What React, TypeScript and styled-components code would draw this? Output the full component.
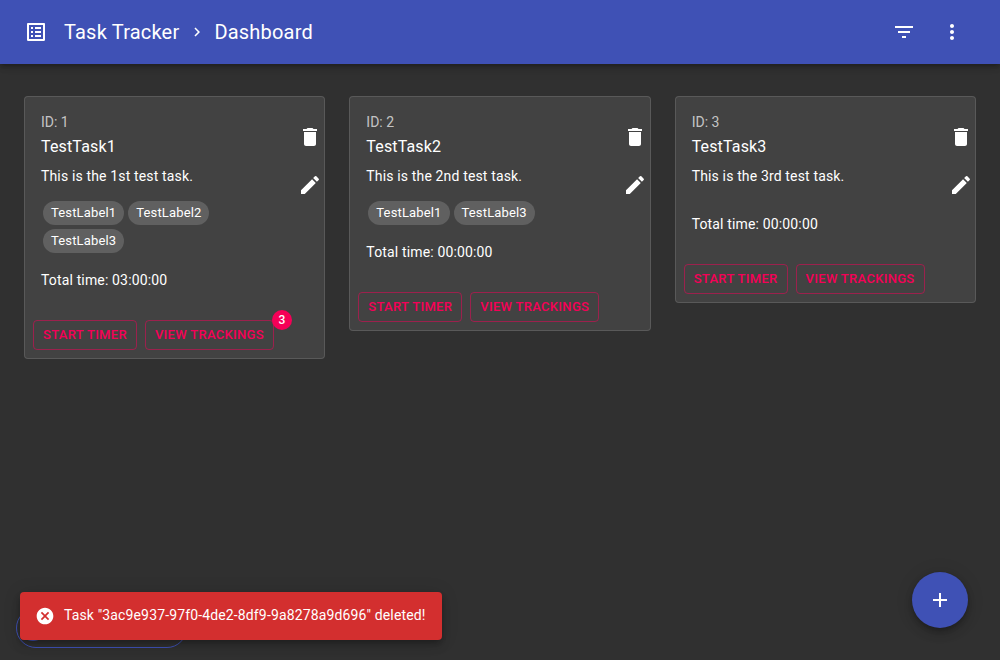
import styled, { createGlobalStyle } from "styled-components";

const GlobalStyle = createGlobalStyle`
  html, body {
    margin: 0;
    height: 100%;
    background: #303030;
    color: #fff;
    font-family: Roboto, "Liberation Sans", sans-serif;
  }
  * { box-sizing: border-box; }
`;

const Page = styled.div`
  position: relative;
  width: 1000px;
  height: 660px;
  overflow: hidden;
`;

const AppBar = styled.header`
  height: 64px;
  padding: 0 24px;
  display: flex;
  align-items: center;
  background: #3f51b5;
  box-shadow: 0 2px 4px -1px rgba(0,0,0,.2), 0 4px 5px 0 rgba(0,0,0,.14), 0 1px 10px 0 rgba(0,0,0,.12);
`;

const Crumbs = styled.div`
  display: flex;
  align-items: center;
  flex: 1;
  margin-left: 16px;
  font-size: 20px;
  font-weight: 400;
  letter-spacing: 0.2px;
`;

const CrumbSeparator = styled.span`
  display: flex;
  margin: 0 8.5px;
`;

const BarButton = styled.button`
  width: 48px;
  height: 48px;
  padding: 0;
  border: 0;
  background: none;
  color: #fff;
  display: flex;
  align-items: center;
  justify-content: center;
`;

const Cards = styled.main`
  display: grid;
  grid-template-columns: repeat(3, 1fr);
  gap: 24px;
  align-items: start;
  padding: 32px 24px;
`;

const Card = styled.section`
  background: #424242;
  border: 1px solid rgba(255,255,255,.12);
  border-radius: 4px;
`;

const CardBody = styled.div`
  display: flex;
  padding: 16px 2.4px 30px 16px;
`;

const CardText = styled.div`
  flex: 1;
  min-width: 0;
`;

const TaskId = styled.div`
  font-size: 14px;
  line-height: 20px;
  color: rgba(255,255,255,.7);
  margin-top: -1px;
`;

const TaskName = styled.div`
  font-size: 16px;
  line-height: 24px;
  letter-spacing: 0.15px;
  margin-top: 3px;
`;

const Description = styled.div`
  font-size: 14px;
  line-height: 20px;
  margin-top: 7px;
  letter-spacing: 0.15px;
`;

const Chips = styled.div`
  display: flex;
  flex-wrap: wrap;
  margin: 13px 0 15px;
`;

const Chip = styled.span`
  height: 24px;
  margin: 2px;
  padding: 0 8px;
  border-radius: 12px;
  background: rgba(255,255,255,.16);
  font-size: 13px;
  line-height: 24px;
  letter-spacing: 0.15px;
`;

const TotalTime = styled.div`
  font-size: 14px;
  line-height: 20px;
  letter-spacing: 0.15px;
`;

const CardIcons = styled.div`
  width: 24px;
  padding-top: 12px;
  display: flex;
  flex-direction: column;
  gap: 24px;
  margin-left: 8px;
`;

const IconSlot = styled.span`
  display: flex;
  width: 24px;
  height: 24px;
  color: #fff;
`;

const Actions = styled.div`
  display: flex;
  gap: 8px;
  padding: 0 8px 8px;
`;

const ActionWrap = styled.span`
  position: relative;
  display: inline-flex;
`;

const ActionButton = styled.button`
  height: 30px;
  padding: 0 9px 2px;
  background: none;
  border: 1px solid rgba(245,0,87,.5);
  border-radius: 4px;
  color: #f50057;
  font-family: inherit;
  font-size: 13px;
  font-weight: 500;
  letter-spacing: 0.3px;
  text-transform: uppercase;
`;

const Badge = styled.span`
  position: absolute;
  top: -10px;
  right: -18px;
  width: 20px;
  height: 20px;
  border-radius: 50%;
  background: #f50057;
  color: #fff;
  font-size: 12px;
  font-weight: 500;
  line-height: 20px;
  text-align: center;
`;

const Fab = styled.button`
  position: absolute;
  right: 32px;
  bottom: 32px;
  width: 56px;
  height: 56px;
  padding: 0;
  border: 0;
  border-radius: 50%;
  background: #3f51b5;
  color: #fff;
  display: flex;
  align-items: center;
  justify-content: center;
  box-shadow: 0 3px 5px -1px rgba(0,0,0,.2), 0 6px 10px 0 rgba(0,0,0,.14), 0 1px 18px 0 rgba(0,0,0,.12);
`;

const HiddenPill = styled.div`
  position: absolute;
  left: 16px;
  bottom: 12px;
  width: 171px;
  height: 40px;
  border: 1px solid #3f51b5;
  border-radius: 20px;
`;

const PillDot = styled.span`
  position: absolute;
  left: 4px;
  top: 8px;
  width: 24px;
  height: 24px;
  border-radius: 50%;
  background: #3f51b5;
`;

const Snackbar = styled.div`
  position: absolute;
  left: 20px;
  bottom: 20px;
  width: 422px;
  height: 48px;
  padding: 0 16px 0 15px;
  display: flex;
  align-items: center;
  gap: 9px;
  background: #d32f2f;
  border-radius: 4px;
  font-size: 14px;
  letter-spacing: 0.14px;
  color: #fff;
  box-shadow: 0 3px 5px -1px rgba(0,0,0,.2), 0 6px 10px 0 rgba(0,0,0,.14), 0 1px 18px 0 rgba(0,0,0,.12);
`;

const SnackMessage = styled.span`
  margin-bottom: 2px;
`;

function Icon({ d, size = 24 }: { d: string; size?: number }) {
  return (
    <svg width={size} height={size} viewBox="0 0 24 24" fill="currentColor">
      <path d={d} />
    </svg>
  );
}

const icons = {
  list: "M19 5v14H5V5h14m1.1-2H3.9c-.5 0-.9.4-.9.9v16.2c0 .4.4.9.9.9h16.2c.4 0 .9-.5.9-.9V3.9c0-.5-.5-.9-.9-.9zM11 7h6v2h-6V7zm0 4h6v2h-6v-2zm0 4h6v2h-6zM7 7h2v2H7zm0 4h2v2H7zm0 4h2v2H7z",
  next: "M10 6L8.59 7.41 13.17 12l-4.58 4.59L10 18l6-6z",
  filter: "M10 18h4v-2h-4v2zM3 6v2h18V6H3zm3 7h12v-2H6v2z",
  more: "M12 8c1.1 0 2-.9 2-2s-.9-2-2-2-2 .9-2 2 .9 2 2 2zm0 2c-1.1 0-2 .9-2 2s.9 2 2 2 2-.9 2-2-.9-2-2-2zm0 6c-1.1 0-2 .9-2 2s.9 2 2 2 2-.9 2-2-.9-2-2-2z",
  trash: "M6 19c0 1.1.9 2 2 2h8c1.1 0 2-.9 2-2V7H6v12zM19 4h-3.5l-1-1h-5l-1 1H5v2h14V4z",
  edit: "M3 17.25V21h3.75L17.81 9.94l-3.75-3.75L3 17.25zM20.71 7.04c.39-.39.39-1.02 0-1.41l-2.34-2.34a.9959.9959 0 0 0-1.41 0l-1.83 1.83 3.75 3.75 1.83-1.83z",
  add: "M19 13h-6v6h-2v-6H5v-2h6V5h2v6h6v2z",
  cancel: "M12 2C6.47 2 2 6.47 2 12s4.47 10 10 10 10-4.47 10-10S17.53 2 12 2zm5 13.59L15.59 17 12 13.41 8.41 17 7 15.59 10.59 12 7 8.41 8.41 7 12 10.59 15.59 7 17 8.41 13.41 12 17 15.59z",
};

interface ITask {
  id: number;
  name: string;
  description: string;
  labels: string[];
  total: string;
  trackings?: number;
}

const tasks: ITask[] = [
  { id: 1, name: "TestTask1", description: "This is the 1st test task.", labels: ["TestLabel1", "TestLabel2", "TestLabel3"], total: "03:00:00", trackings: 3 },
  { id: 2, name: "TestTask2", description: "This is the 2nd test task.", labels: ["TestLabel1", "TestLabel3"], total: "00:00:00" },
  { id: 3, name: "TestTask3", description: "This is the 3rd test task.", labels: [], total: "00:00:00" },
];

function App() {
  return (
    <Page>
      <GlobalStyle />
      <AppBar>
        <Icon d={icons.list} />
        <Crumbs>
          Task Tracker
          <CrumbSeparator>
            <Icon d={icons.next} size={18} />
          </CrumbSeparator>
          Dashboard
        </Crumbs>
        <BarButton aria-label="filter">
          <Icon d={icons.filter} />
        </BarButton>
        <BarButton aria-label="more">
          <Icon d={icons.more} />
        </BarButton>
      </AppBar>
      <Cards>
        {tasks.map((task) => (
          <Card key={task.id}>
            <CardBody>
              <CardText>
                <TaskId>ID: {task.id}</TaskId>
                <TaskName>{task.name}</TaskName>
                <Description>{task.description}</Description>
                <Chips>
                  {task.labels.map((label) => (
                    <Chip key={label}>{label}</Chip>
                  ))}
                </Chips>
                <TotalTime>Total time: {task.total}</TotalTime>
              </CardText>
              <CardIcons>
                <IconSlot>
                  <Icon d={icons.trash} />
                </IconSlot>
                <IconSlot>
                  <Icon d={icons.edit} />
                </IconSlot>
              </CardIcons>
            </CardBody>
            <Actions>
              <ActionButton>Start timer</ActionButton>
              <ActionWrap>
                <ActionButton>View trackings</ActionButton>
                {task.trackings ? <Badge>{task.trackings}</Badge> : null}
              </ActionWrap>
            </Actions>
          </Card>
        ))}
      </Cards>
      <HiddenPill>
        <PillDot />
      </HiddenPill>
      <Snackbar>
        <Icon d={icons.cancel} size={20} />
        <SnackMessage>Task "3ac9e937-97f0-4de2-8df9-9a8278a9d696" deleted!</SnackMessage>
      </Snackbar>
      <Fab aria-label="add">
        <Icon d={icons.add} />
      </Fab>
    </Page>
  );
}

export default App;
